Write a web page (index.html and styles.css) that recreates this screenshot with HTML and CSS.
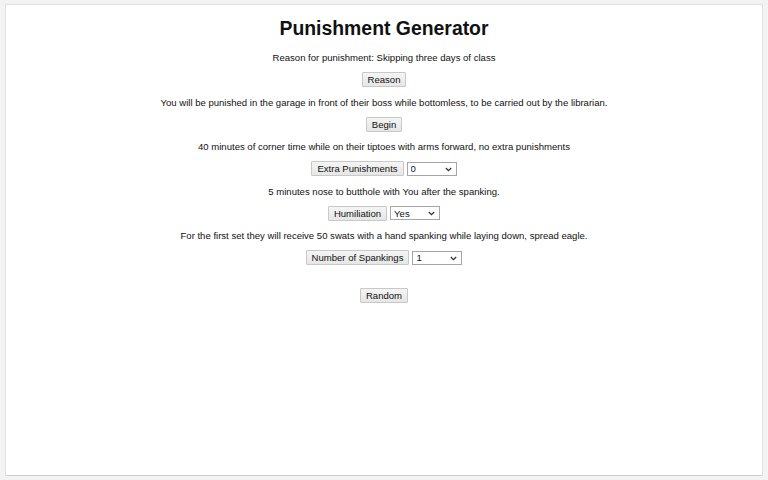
FILE: index.html
```html
<!DOCTYPE html>
<html>
<head>
<meta charset="utf-8">
<title>Punishment Generator</title>
<link rel="stylesheet" href="styles.css">
</head>
<body>
<div class="panel">
  <h1 class="title">Punishment Generator</h1>
  <p class="line">Reason for punishment: Skipping three days of class</p>
  <div class="row"><button class="btn">Reason</button></div>
  <p class="line">You will be punished in the garage in front of their boss while bottomless, to be carried out by the librarian.</p>
  <div class="row"><button class="btn">Begin</button></div>
  <p class="line">40 minutes of corner time while on their tiptoes with arms forward, no extra punishments</p>
  <div class="row"><button class="btn">Extra Punishments</button><span class="selwrap"><select class="sel"><option>0</option></select><svg class="chev" width="7" height="5" viewBox="0 0 7 5"><path d="M0.8 1 L3.5 3.6 L6.2 1" fill="none" stroke="#333" stroke-width="1.3"/></svg></span></div>
  <p class="line">5 minutes nose to butthole with You after the spanking.</p>
  <div class="row"><button class="btn">Humiliation</button><span class="selwrap"><select class="sel"><option>Yes</option></select><svg class="chev" width="7" height="5" viewBox="0 0 7 5"><path d="M0.8 1 L3.5 3.6 L6.2 1" fill="none" stroke="#333" stroke-width="1.3"/></svg></span></div>
  <p class="line">For the first set they will receive 50 swats with a hand spanking while laying down, spread eagle.</p>
  <div class="row"><button class="btn">Number of Spankings</button><span class="selwrap"><select class="sel"><option>1</option></select><svg class="chev" width="7" height="5" viewBox="0 0 7 5"><path d="M0.8 1 L3.5 3.6 L6.2 1" fill="none" stroke="#333" stroke-width="1.3"/></svg></span></div>
  <div class="row random"><button class="btn">Random</button></div>
</div>
</body>
</html>
```
FILE: styles.css
```css
html, body {
  margin: 0;
  padding: 0;
  background: #f3f3f3;
  font-family: "Liberation Sans", Arial, sans-serif;
  color: #111;
}
body {
  padding: 4px 5px 4px 5px;
  height: 480px;
  box-sizing: border-box;
}
.panel {
  background: #fff;
  height: 472px;
  box-sizing: border-box;
  border: 1px solid #e0e0e0;
  border-bottom-color: #cfcfcf;
  display: flex;
  flex-direction: column;
  align-items: center;
  gap: 8px;
  padding-top: 11px;
}
.title {
  margin: 0 0 3px 0;
  font-size: 19.4px;
  line-height: 24px;
  font-weight: bold;
}
.line {
  margin: 0;
  font-size: 9.55px;
  line-height: 13px;
}
.row {
  display: flex;
  align-items: center;
  gap: 3px;
  height: 15.5px;
}
.btn {
  font-family: "Liberation Sans", Arial, sans-serif;
  font-size: 9.55px;
  height: 15px;
  padding: 0 5px;
  margin: 0;
  color: #111;
  background: linear-gradient(#f5f5f5, #e6e6e6);
  border: 1px solid #c8c8c8;
  border-radius: 1px;
}
.selwrap {
  position: relative;
  display: block;
  width: 50px;
  height: 14px;
}
.sel {
  -webkit-appearance: none;
  appearance: none;
  font-family: "Liberation Sans", Arial, sans-serif;
  font-size: 9.55px;
  width: 50px;
  height: 14px;
  padding: 0 0 0 3px;
  margin: 0;
  background: #fff;
  border: 1px solid #a5a5a5;
  border-radius: 0;
  color: #111;
  display: block;
}
.chev {
  position: absolute;
  right: 5px;
  top: 5px;
  pointer-events: none;
}
.random {
  margin-top: 14px;
}
```
